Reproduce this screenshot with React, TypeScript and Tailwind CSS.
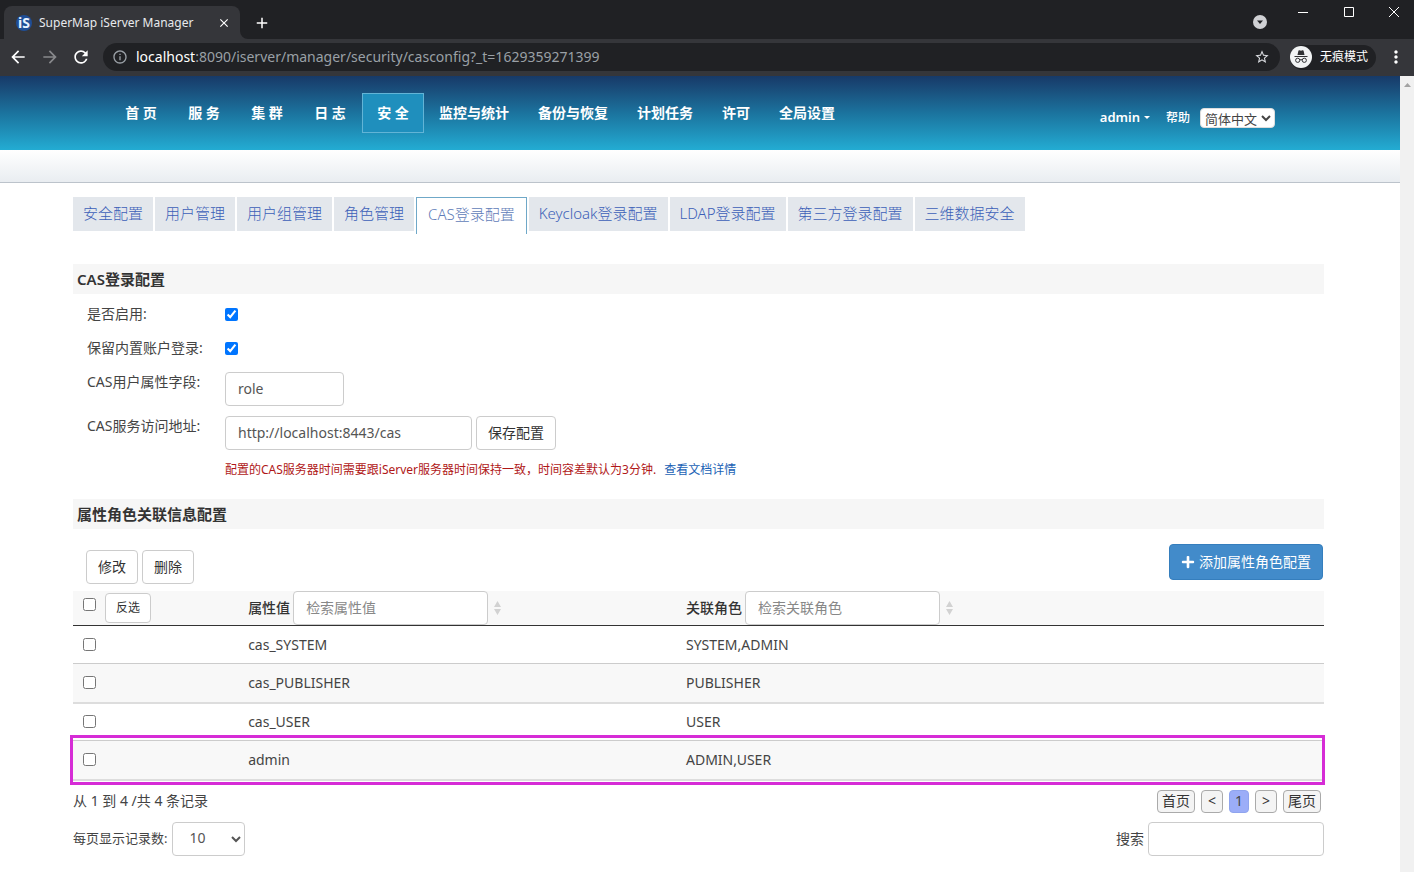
import type { ReactNode } from "react";
import {
  MdArrowBack,
  MdArrowForward,
  MdRefresh,
  MdInfoOutline,
  MdStarBorder,
  MdMoreVert,
  MdAdd,
  MdClose,
} from "react-icons/md";
import { FaPlus } from "react-icons/fa";

const shortNav = ["首 页", "服 务", "集 群", "日 志", "安 全"];
const longNav = ["监控与统计", "备份与恢复", "计划任务", "许可", "全局设置"];
const tabs = [
  "安全配置",
  "用户管理",
  "用户组管理",
  "角色管理",
  "CAS登录配置",
  "Keycloak登录配置",
  "LDAP登录配置",
  "第三方登录配置",
  "三维数据安全",
];
const rows = [
  { value: "cas_SYSTEM", roles: "SYSTEM,ADMIN" },
  { value: "cas_PUBLISHER", roles: "PUBLISHER" },
  { value: "cas_USER", roles: "USER" },
  { value: "admin", roles: "ADMIN,USER" },
];

const field =
  "h-[34px] rounded border border-[#ccc] bg-white px-3 pb-[2px] text-sm text-[#555] placeholder:text-[#888]";
const button =
  "h-[34px] rounded border border-[#ccc] bg-white px-[11px] text-sm text-[#333]";
const pager =
  "h-[23px] rounded border border-[#aaa] bg-[#f4f4f4] text-sm leading-5 text-[#333]";

function BrowserChrome() {
  return (
    <header className="text-white">
      <div className="flex h-[39px] items-start bg-[#202124]">
        <div className="relative ml-1 mt-[6px] flex h-[33px] w-[236px] items-center rounded-t-lg bg-[#35363a] pl-3 pr-[9px]">
          <span className="mr-[7px] flex size-4 items-center justify-center rounded-full bg-[#1f4e96] text-sm font-bold leading-4 text-[#e8f1ff]">
            iS
          </span>
          <span className="grow text-xs text-[#e8eaed]">SuperMap iServer Manager</span>
          <button aria-label="关闭标签页">
            <MdClose className="size-[14px]" />
          </button>
          <svg className="absolute -right-2 bottom-0 size-2" viewBox="0 0 8 8" fill="#35363a">
            <path d="M0 0v8h8A8 8 0 0 1 0 0z" />
          </svg>
        </div>
        <button className="ml-[13px] mt-[14px]" aria-label="新标签页">
          <MdAdd className="size-[18px]" />
        </button>
        <div className="ml-auto flex items-start">
          <button className="mr-[30px] mt-[15px]" aria-label="搜索标签页">
            <svg className="size-[14px]" viewBox="0 0 14 14">
              <circle cx="7" cy="7" r="7" fill="#d0d1d4" />
              <path d="M4 5.5h6L7 9z" fill="#202124" />
            </svg>
          </button>
          <button className="mr-[34px] mt-[6px]" aria-label="最小化">
            <svg className="size-3" viewBox="0 0 12 12" stroke="#fff" fill="none">
              <path d="M1 6.500h10" />
            </svg>
          </button>
          <button className="mr-[33px] mt-[6px]" aria-label="最大化">
            <svg className="size-3" viewBox="0 0 12 12" stroke="#fff" fill="none">
              <path d="M1.500 1.500h9v9h-9z" />
            </svg>
          </button>
          <button className="mr-[14px] mt-[6px]" aria-label="关闭">
            <svg className="size-3" viewBox="0 0 12 12" stroke="#fff" fill="none">
              <path d="M1 1l10 10M11 1L1 11" />
            </svg>
          </button>
        </div>
      </div>
      <div className="flex h-[37px] items-center bg-[#35363a] pb-px pl-2">
        <button aria-label="后退">
          <MdArrowBack className="size-5" />
        </button>
        <button className="ml-3" aria-label="前进">
          <MdArrowForward className="size-5 text-[#88898c]" />
        </button>
        <button className="ml-[11px]" aria-label="刷新">
          <MdRefresh className="size-5" />
        </button>
        <div className="ml-3 flex h-7 grow items-center rounded-full bg-[#202124] pl-[9px] pr-[10px]">
          <MdInfoOutline className="size-4 text-[#9aa0a6]" />
          <span className="ml-2 grow text-sm text-[#9aa0a6]">
            <span className="text-white">localhost</span>
            :8090/iserver/manager/security/casconfig?_t=1629359271399
          </span>
          <button aria-label="收藏">
            <MdStarBorder className="size-4 text-[#dadce0]" />
          </button>
        </div>
        <div className="ml-[10px] flex h-[25px] items-center rounded-full bg-[#202124] pr-2">
          <svg className="mr-2 size-[22px]" viewBox="0 0 22 22">
            <circle cx="11" cy="11" r="11" fill="#f1f3f4" />
            <path d="M7.500 9L8.400 4.800q.3-.8 1.100-.5l1.500.4 1.500-.4q.8-.3 1.100.5L14.500 9z" fill="#303134" />
            <path d="M4.500 10.500h13" stroke="#303134" strokeWidth="1" />
            <g fill="none" stroke="#303134" strokeWidth="1">
              <circle cx="7.700" cy="14.300" r="2.100" />
              <circle cx="14.300" cy="14.300" r="2.100" />
              <path d="M9.800 14q1.200-.8 2.400 0" />
            </g>
          </svg>
          <span className="text-xs">无痕模式</span>
        </div>
        <button className="ml-[10px] mr-2" aria-label="菜单">
          <MdMoreVert className="size-5" />
        </button>
      </div>
    </header>
  );
}

function NavItem({ label, className }: { label: string; className: string }) {
  const active = label === "安 全";
  return (
    <a
      href="#"
      className={`flex h-10 items-center justify-center border font-bold text-sm text-white ${className} ${
        active ? "border-[#62b4d6] bg-[#1f8fbd]" : "border-transparent"
      }`}
    >
      {label}
    </a>
  );
}

function SiteHeader() {
  return (
    <>
      <div className="flex h-[74px] items-center bg-linear-to-b from-[#173a68] via-[#1b739e] to-[#23acd3] pl-[110px] pr-[125px]">
        <nav className="flex gap-px">
          {shortNav.map((n) => (
            <NavItem key={n} label={n} className="w-[62px]" />
          ))}
          {longNav.map((n) => (
            <NavItem key={n} label={n} className="px-[13px]" />
          ))}
        </nav>
        <div className="ml-auto flex items-center pt-[9px] text-white">
          <button className="flex items-center gap-1 text-[13px] font-semibold">
            admin
            <span className="border-x-[3px] border-t-[3px] border-x-transparent border-t-white" />
          </button>
          <a href="#" className="ml-4 text-xs font-medium">
            帮助
          </a>
          <select
            aria-label="语言"
            className="ml-[10px] h-5 w-[75px] rounded border border-[#ddd] bg-white text-[13px] leading-4 text-[#444]"
          >
            <option>简体中文</option>
          </select>
        </div>
      </div>
      <div className="h-[33px] border-b border-[#bcc3cb] bg-linear-to-b from-white to-[#e9edf1]" />
    </>
  );
}

function Tabs() {
  return (
    <nav className="flex h-[37px] items-start gap-[2px] text-[15px] font-light text-[#3c5fb8]">
      {tabs.map((t) =>
        t === "CAS登录配置" ? (
          <a
            key={t}
            href="#"
            className="flex h-[37px] items-start border border-b-0 border-[#6fa8c8] px-[11px] pt-1 leading-6 text-[#5f7cb8]"
          >
            {t}
          </a>
        ) : (
          <a key={t} href="#" className="h-[34px] bg-[#e3e7ec] px-[10px] pt-1 leading-6">
            {t}
          </a>
        ),
      )}
    </nav>
  );
}

function SectionTitle({ children }: { children: ReactNode }) {
  return (
    <h2 className="h-[30px] bg-[#f6f6f6] px-1 text-[15px] font-semibold leading-[30px] text-[#333]">
      {children}
    </h2>
  );
}

function SortIcon() {
  return (
    <svg className="ml-[6px] h-[14px] w-[7px]" viewBox="0 0 7 14" fill="#d2d2d2">
      <path d="M0 6h7L3.500 0zM0 8h7L3.500 14z" />
    </svg>
  );
}

function CasForm() {
  return (
    <form className="pl-[14px] pt-[3px] text-sm leading-5 text-[#444]">
      <div className="flex h-[34px] items-center">
        <label htmlFor="enabled" className="w-[138px]">
          是否启用:
        </label>
        <input id="enabled" type="checkbox" defaultChecked className="size-[13px]" />
      </div>
      <div className="flex h-[34px] items-center">
        <label htmlFor="builtin" className="w-[138px]">
          保留内置账户登录:
        </label>
        <input id="builtin" type="checkbox" defaultChecked className="size-[13px]" />
      </div>
      <div className="mt-[7px] flex items-start">
        <label htmlFor="attr" className="w-[138px]">
          CAS用户属性字段:
        </label>
        <input id="attr" defaultValue="role" className={`${field} w-[119px]`} />
      </div>
      <div className="mt-[10px] flex items-start">
        <label htmlFor="url" className="w-[138px]">
          CAS服务访问地址:
        </label>
        <input id="url" defaultValue="http://localhost:8443/cas" className={`${field} w-[247px]`} />
        <button type="button" className={`${button} ml-1`}>
          保存配置
        </button>
      </div>
      <p className="ml-[138px] mt-[10px] text-xs leading-5 text-[#b01818]">
        配置的CAS服务器时间需要跟iServer服务器时间保持一致，时间容差默认为3分钟.
        <a href="#" className="ml-2 text-[#1a62b5]">
          查看文档详情
        </a>
      </p>
    </form>
  );
}

function RoleTable() {
  return (
    <div className="relative mt-[7px]">
      <table className="w-full table-fixed border-collapse text-left text-sm text-[#444]">
        <colgroup>
          <col className="w-[14%]" />
          <col className="w-[35%]" />
          <col />
        </colgroup>
        <thead>
          <tr className="h-[34px] border-b border-[#333] bg-[#f8f8f8] text-[#333]">
            <th className="pl-[10px]">
              <div className="flex items-start gap-[9px]">
                <input type="checkbox" aria-label="全选" className="mt-[5px] size-[13px]" />
                <button className="h-[30px] rounded border border-[#ccc] bg-white px-[10px] text-xs font-normal">
                  反选
                </button>
              </div>
            </th>
            <th>
              <div className="flex items-center">
                <label htmlFor="find-value" className="mr-[3px] font-medium">
                  属性值
                </label>
                <input id="find-value" placeholder="检索属性值" className={`${field} w-[195px] font-normal`} />
                <SortIcon />
              </div>
            </th>
            <th>
              <div className="flex items-center">
                <label htmlFor="find-role" className="mr-[3px] font-medium">
                  关联角色
                </label>
                <input id="find-role" placeholder="检索关联角色" className={`${field} w-[195px] font-normal`} />
                <SortIcon />
              </div>
            </th>
          </tr>
        </thead>
        <tbody>
          {rows.map((r) => (
            <tr
              key={r.value}
              className="h-[38px] border-b border-[#ccc] even:h-[39px] even:border-b-2 even:border-[#ddd] even:bg-[#f8f8f8]"
            >
              <td className="pl-[10px]">
                <input type="checkbox" aria-label={r.value} className="block size-[13px]" />
              </td>
              <td>{r.value}</td>
              <td>{r.roles}</td>
            </tr>
          ))}
        </tbody>
      </table>
      <div className="pointer-events-none absolute -bottom-1 -left-[3px] -right-px h-[50px] border-[3px] border-[#d62cd6]" />
    </div>
  );
}

function TableFooter() {
  return (
    <footer className="text-sm text-[#444]">
      <div className="mt-[9px] flex h-[23px] items-center">
        <span className="leading-5">从 1 到 4 /共 4 条记录</span>
        <div className="ml-auto mr-[3px] flex gap-[6px]">
          <button className={`${pager} px-1`}>首页</button>
          <button className={`${pager} w-[22px]`}>&lt;</button>
          <button className="h-[23px] w-5 rounded border border-[#8fa4ee] bg-[#9badf8] text-sm leading-5 text-[#444]">
            1
          </button>
          <button className={`${pager} w-[22px]`}>&gt;</button>
          <button className={`${pager} px-1`}>尾页</button>
        </div>
      </div>
      <div className="mt-[9px] flex items-center">
        <label htmlFor="size" className="mr-[5px] text-[13px]">
          每页显示记录数:
        </label>
        <select id="size" className={`${field} w-[73px]`}>
          <option>10</option>
        </select>
        <label htmlFor="search" className="ml-auto mr-1">
          搜索
        </label>
        <input id="search" className={`${field} w-[176px]`} />
      </div>
    </footer>
  );
}

export default function App() {
  return (
    <div className="flex min-h-screen flex-col bg-white font-['Noto_Sans','Noto_Sans_CJK_SC',sans-serif]">
      <BrowserChrome />
      <div className="flex grow">
        <div className="min-w-0 grow">
          <SiteHeader />
          <main className="pl-[73px] pr-[76px] pt-[14px]">
            <Tabs />
            <div className="mt-[30px]">
              <SectionTitle>CAS登录配置</SectionTitle>
              <CasForm />
            </div>
            <div className="mt-[19px]">
              <SectionTitle>属性角色关联信息配置</SectionTitle>
              <div className="flex items-end gap-1 pl-[13px] pt-[15px]">
                <button className={button}>修改</button>
                <button className={button}>删除</button>
                <button className="mb-1 ml-auto mr-px flex h-9 items-center gap-1 rounded border border-[#357ebd] bg-[#428bca] px-[11px] text-sm text-white">
                  <FaPlus className="size-[14px]" />
                  添加属性角色配置
                </button>
              </div>
              <RoleTable />
              <TableFooter />
            </div>
          </main>
        </div>
        <div className="flex w-[14px] shrink-0 justify-center bg-[#f1f1f1] pt-[7px]">
          <svg className="h-[4px] w-[7px]" viewBox="0 0 7 4" fill="#a3a3a3">
            <path d="M0 4h7L3.500 0z" />
          </svg>
        </div>
      </div>
    </div>
  );
}
